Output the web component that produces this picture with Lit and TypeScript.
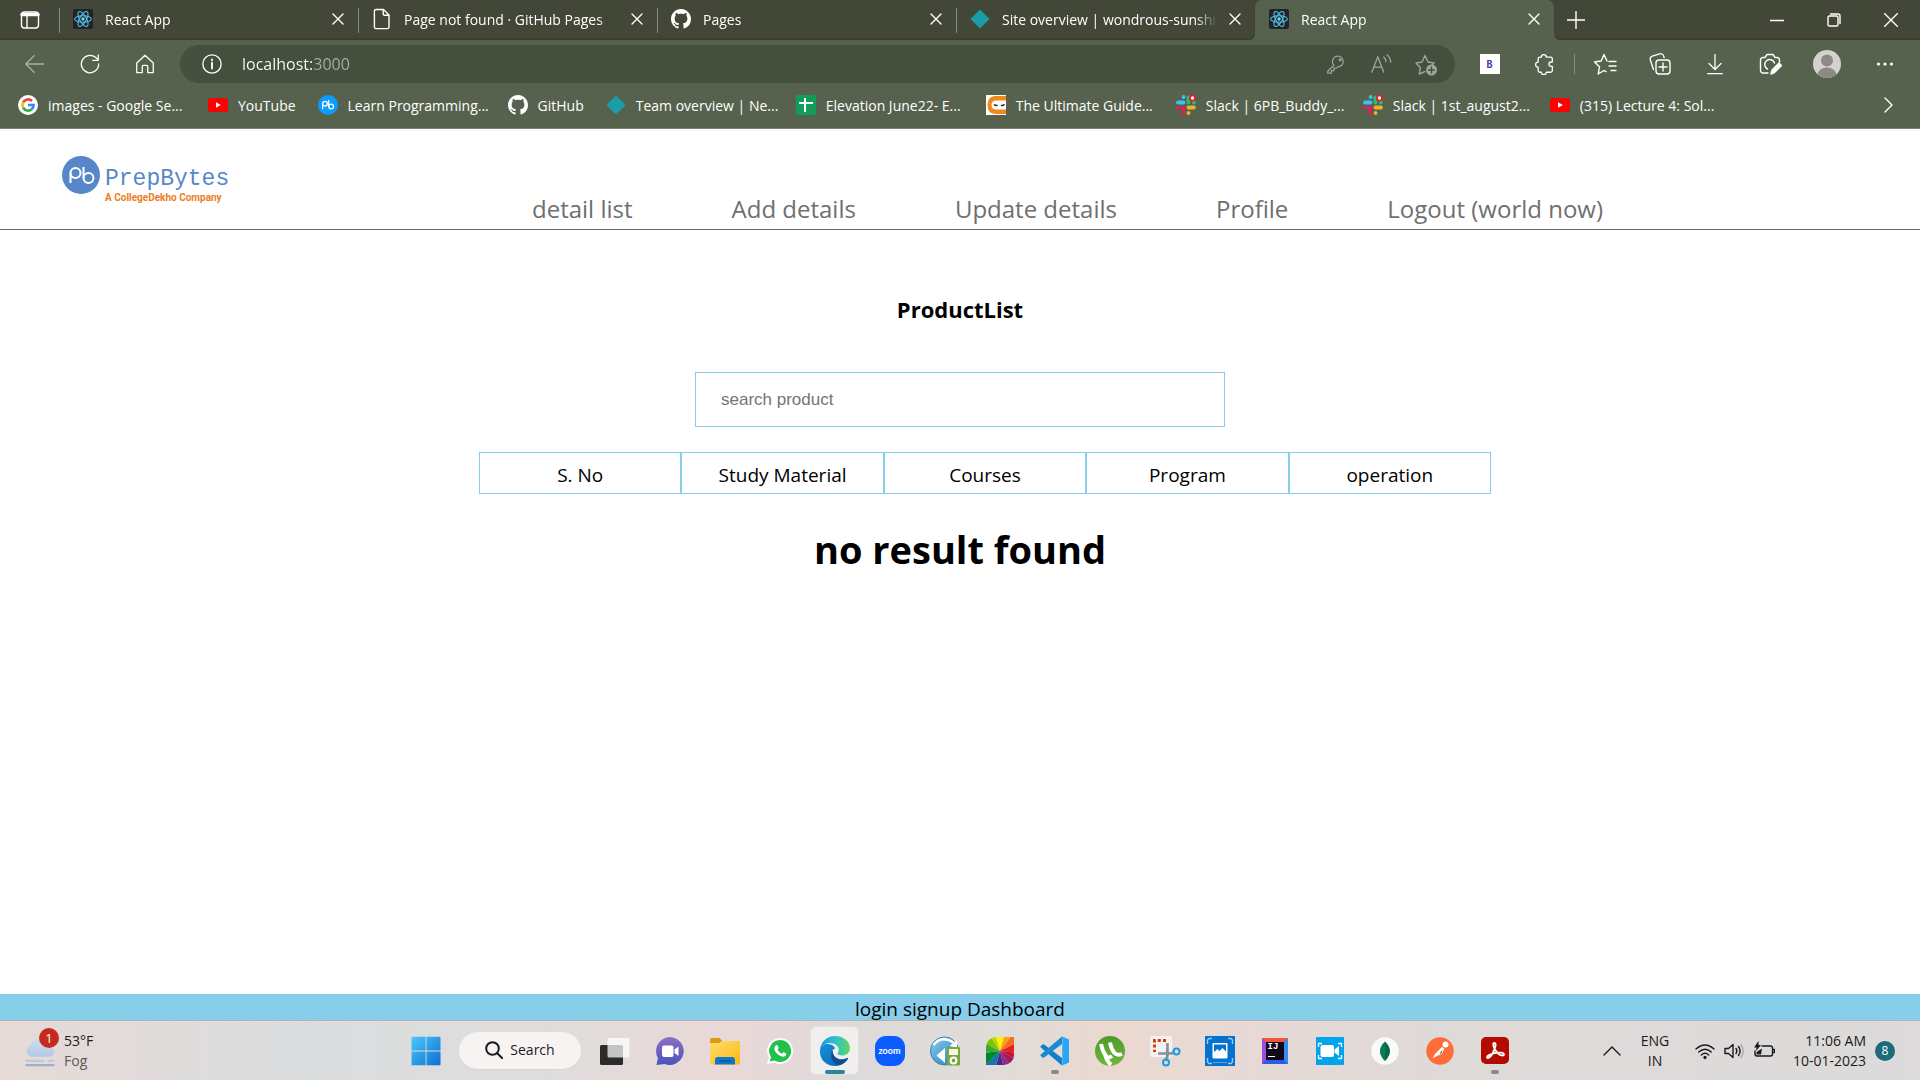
import { LitElement, html, css, svg, TemplateResult } from "lit";
import { customElement } from "lit/decorators.js";
import { classMap } from "lit/directives/class-map.js";

type Icon = TemplateResult;

const icon = (size: number, box: string, body: unknown): Icon =>
  html`<svg width=${size} height=${size} viewBox=${box} aria-hidden="true">${body}</svg>`;

const line = (size: number, body: unknown, box = "0 0 24 24"): Icon =>
  html`<svg class="line" width=${size} height=${size} viewBox=${box} aria-hidden="true">${body}</svg>`;

/* ---------- favicons ---------- */
const reactIcon = icon(20, "0 0 20 20", svg`
  <rect width="20" height="20" rx="2" fill="#20232a"/>
  <g fill="none" stroke="#53c1de" stroke-width="1.1">
    <ellipse cx="10" cy="10" rx="8.4" ry="3.3"/>
    <ellipse cx="10" cy="10" rx="8.4" ry="3.3" transform="rotate(60 10 10)"/>
    <ellipse cx="10" cy="10" rx="8.4" ry="3.3" transform="rotate(120 10 10)"/>
  </g>
  <circle cx="10" cy="10" r="1.7" fill="#61dafb"/>`);

const pageIcon = line(24, svg`<path d="M6 2.5h7.5L19 8v12a1.6 1.6 0 0 1-1.600 1.600H6A1.600 1.600 0 0 1 4.400 20V4.100A1.600 1.600 0 0 1 6 2.500zM13.200 2.800V7a1.300 1.300 0 0 0 1.300 1.300h4.300"/>`);

const githubIcon = icon(20, "0 0 16 16", svg`<path fill="#fff" d="M8 0C3.58 0 0 3.58 0 8c0 3.54 2.29 6.53 5.47 7.59.4.07.55-.17.55-.38 0-.19-.01-.82-.01-1.49-2.01.37-2.53-.49-2.69-.94-.09-.23-.48-.94-.82-1.13-.28-.15-.68-.52-.01-.53.63-.01 1.08.58 1.23.82.72 1.21 1.87.87 2.33.66.07-.52.28-.87.51-1.07-1.78-.2-3.64-.89-3.64-3.95 0-.87.31-1.59.82-2.15-.08-.2-.36-1.02.08-2.12 0 0 .67-.21 2.2.82.64-.18 1.32-.27 2-.27.68 0 1.36.09 2 .27 1.53-1.04 2.2-.82 2.2-.82.44 1.1.16 1.92.08 2.12.51.56.82 1.27.82 2.15 0 3.07-1.87 3.75-3.65 3.95.29.25.54.73.54 1.48 0 1.07-.01 1.93-.01 2.2 0 .21.15.46.55.38A8.013 8.013 0 0 0 16 8c0-4.42-3.58-8-8-8z"/>`);

const diamondIcon = icon(20, "0 0 20 20", svg`<path fill="#1a9cab" d="M10 .4 19.600 10 10 19.600.400 10z"/>`);

const googleIcon = icon(20, "0 0 20 20", svg`
  <circle cx="10" cy="10" r="10" fill="#fff"/>
  <g fill="none" stroke-width="2.600">
    <path stroke="#ea4335" d="M5.100 7.400A5.600 5.600 0 0 1 14 6"/>
    <path stroke="#fbbc05" d="M5.100 12.700a5.600 5.600 0 0 1 0-5.400"/>
    <path stroke="#34a853" d="M13.700 14.200a5.600 5.600 0 0 1-8.600-1.600"/>
    <path stroke="#4285f4" d="M10 10h5.600a5.600 5.600 0 0 1-2 4.300"/>
  </g>`);

const youtubeIcon = icon(20, "0 0 20 20", svg`
  <rect y="3" width="20" height="14" rx="3" fill="#f00"/><path fill="#fff" d="M8 7.200 12.800 10 8 12.800z"/>`);

const pbIcon = icon(20, "0 0 20 20", svg`
  <circle cx="10" cy="10" r="10" fill="#0a9cff"/>
  <g fill="none" stroke="#fff" stroke-width="1.200">
    <circle cx="7" cy="8.700" r="2.400"/><path d="M4.600 8.700v5.600M10.700 5v7"/><circle cx="13.100" cy="11.500" r="2.400"/>
  </g>`);

const sheetIcon = icon(20, "0 0 20 20", svg`
  <rect width="20" height="20" rx="2" fill="#0f9d58"/><path stroke="#fff" stroke-width="2" d="M9 3v14M3 8h14"/>`);

const ninjaIcon = icon(20, "0 0 20 20", svg`
  <rect width="20" height="20" fill="#fff"/>
  <path fill="#f0891c" d="M20 1v4.500H9.500Q5.500 6 5.500 10t4 4.500H20V19H9Q1.500 18.500 1.500 10T9 1z"/>
  <path fill="#222" d="m7.500 9 4.500 1q-.500 1.600-2.400 1.300Q7.800 11 7.500 9zM19 9l-4.500 1q.5 1.600 2.400 1.300Q18.700 11 19 9z"/>`);

const slackIcon = icon(20, "0 0 20 20", svg`
  <g stroke-width="3.800" stroke-linecap="round">
    <path stroke="#36c5f0" d="M2 7.500h5.500M7.600 2v.1"/><path stroke="#2eb67d" d="M12.400 2.500v5M17.800 7.500h.1"/>
    <path stroke="#e01e5a" d="M7.500 12.500v5.500M2 12.500h.1"/><path stroke="#ecb22e" d="M12.500 12.500H18M12.500 18v.1"/>
  </g>
  <circle cx="16.500" cy="3" r="2.600" fill="#fff" stroke="#e01e1e" stroke-width="1.900"/>`);

/* ---------- browser glyphs ---------- */
const closeGlyph = line(12, svg`<path d="m1 1 10 10M11 1 1 11"/>`, "0 0 12 12");
const tabsGlyph = line(20, svg`<rect x="1.500" y="2" width="17" height="16" rx="3"/><path stroke-width="3.500" d="M2 4.500h16"/><path d="M7 5v13"/>`, "0 0 20 20");
const plusGlyph = line(18, svg`<path d="M9 0v18M0 9h18"/>`, "0 0 18 18");
const minGlyph = line(14, svg`<path d="M0 7.500h14"/>`, "0 0 14 14");
const restoreGlyph = line(14, svg`<rect x="1" y="3" width="10" height="10" rx="1.500"/><path d="M3.500 1H11a2 2 0 0 1 2 2v7.500"/>`, "0 0 14 14");
const windowClose = line(14, svg`<path d="m.500.500 13 13m0-13-13 13"/>`, "0 0 14 14");
const backGlyph = line(22, svg`<path d="M21.500 12H2M11 3l-9 9 9 9"/>`);
const refreshGlyph = line(22, svg`<path d="M21.500 12A9.500 9.500 0 1 1 18 4.700L21 7.500M21 2v6h-6"/>`);
const homeGlyph = line(22, svg`<path d="M3 11 12 2.500 21 11v10.500h-6V15a1.500 1.500 0 0 0-1.500-1.500h-3A1.500 1.500 0 0 0 9 15v6.500H3z"/>`);
const infoGlyph = line(22, svg`<circle cx="12" cy="12" r="10"/><path stroke-width="2" d="M12 10.500V17M12 7v1"/>`);
const keyGlyph = line(20, svg`<path d="M9.500 13.500 2 21v2h4.500v-3h3v-3h3l1.500-1.500a6.500 6.500 0 1 0-4.500-2z"/><circle cx="17" cy="7" r="1.200"/>`);
const readGlyph = line(22, svg`<path d="M2 21 8.500 4 15 21M4.200 15.500h8.600M15 4.500q2.500 2 2.500 5M18.500 2q4 3.200 4 8"/>`);
const addStarGlyph = line(24, svg`<path d="M11 19.500 5.300 22l1-6.500L2 11l6-1 3-6.500L14 10l6 1-2 2"/><circle cx="17.500" cy="18" r="5.500" fill="#a1a69c" stroke="none"/><path stroke="#454f3e" d="M17.500 15v6m-3-3h6"/>`);
const puzzleGlyph = line(22, svg`<path d="M8 4.500a2.700 2.700 0 0 1 5.400 0H18a2 2 0 0 1 2 2v3.300h-1.300a2.400 2.400 0 0 0 0 4.800H20V19a2 2 0 0 1-2 2h-4.600a2.700 2.700 0 0 1-5.400 0H6.500a2 2 0 0 1-2-2v-3.500a2.700 2.700 0 0 1 0-5.500V6.500a2 2 0 0 1 2-2z"/>`);
const favGlyph = line(24, svg`<path d="M16 9.500h7M16 14h7m-5 4.500h5M14 9l-3-6.500L8.200 9 1.500 10l5 4.800L5.200 22l5.800-3.500 2 1.200"/>`);
const collectGlyph = line(24, svg`<rect x="8" y="8" width="14" height="14" rx="3"/><path d="M15 11v8m-4-4h8M5.500 17.500 2.300 8a3 3 0 0 1 2-3.800l7.400-2.400a3 3 0 0 1 3.800 2l.6 1.700"/>`);
const downGlyph = line(22, svg`<path d="M12 1.500V18M5.500 11.500 12 18l6.500-6.500M4 22.500h16"/>`);
const captureGlyph = line(24, svg`<path d="M10 21H5a2.500 2.500 0 0 1-2.500-2.500V8A2.500 2.500 0 0 1 5 5.500h2L9 2.500h6l2 3h2A2.500 2.500 0 0 1 21.500 8v2M9.500 17a5 5 0 1 1 7-6"/><path fill="#fff" d="m13 22 1-4 7-7 2.500 2.500-7 7z"/>`);
const dotsGlyph = icon(18, "0 0 18 18", svg`<g fill="#fff"><circle cx="2.500" cy="9" r="1.600"/><circle cx="9" cy="9" r="1.600"/><circle cx="15.500" cy="9" r="1.600"/></g>`);
const nextGlyph = line(16, svg`<path d="m5 1 7 7-7 7"/>`, "0 0 16 16");
const avatar = icon(28, "0 0 28 28", svg`
  <clipPath id="face"><circle cx="14" cy="14" r="14"/></clipPath>
  <g clip-path="url(#face)"><rect width="28" height="28" fill="#d4d1cf"/><circle cx="14" cy="10.500" r="6" fill="#8e8987"/><ellipse cx="14" cy="25" rx="9.500" ry="7.500" fill="#8e8987"/></g>`);
const bSquare = html`<span class="b-square">B</span>`;

/* ---------- taskbar icons ---------- */
const startIcon = icon(30, "0 0 30 30", svg`
  <linearGradient id="win" x2="1" y2="1" gradientUnits="objectBoundingBox"><stop stop-color="#4cc8fb"/><stop offset="1" stop-color="#0a6fd0"/></linearGradient>
  <path fill="url(#win)" d="M1 0.800h13.600v13.700H0.500V1zM15.500.800h13.600l.400.400v13.300h-14zM.500 15.500h14.100v13.700H1l-.500-.400zM15.500 15.500h14v13.300l-.400.400H15.500z"/>`);

const taskViewIcon = icon(32, "0 0 32 32", svg`
  <rect x="1" y="10" width="23" height="20" rx="1.500" fill="#2b2b2b"/>
  <rect x="8.500" y="3" width="22" height="19.500" rx="1.500" fill="#fff" opacity=".72"/>`);

const chatIcon = icon(30, "0 0 30 30", svg`
  <linearGradient id="chat" x2="0" y2="1"><stop stop-color="#8f6fc4"/><stop offset="1" stop-color="#4b53bc"/></linearGradient>
  <path fill="url(#chat)" d="M15 1a14 14 0 1 1-5.500 27L1.500 29l1.400-7A14 14 0 0 1 15 1z"/>
  <rect x="7" y="9.500" width="11.500" height="11.500" rx="2" fill="#fff"/><path fill="#fff" d="m19.500 13.500 4-3v9.500l-4-3z"/>`);

const folderIcon = icon(30, "0 0 30 30", svg`
  <linearGradient id="fold" x2="1" y2="1"><stop stop-color="#ffdc70"/><stop offset="1" stop-color="#fbb910"/></linearGradient>
  <path fill="#dc9a10" d="M0 4a2 2 0 0 1 2-2h7.500l2.800 3H28a2 2 0 0 1 2 2v7H0z"/>
  <path fill="url(#fold)" d="M0 7h9.500l2.500-2h18v21.500a2 2 0 0 1-2 2H2a2 2 0 0 1-2-2z"/>
  <path fill="#1176c8" d="M5 28.500V24a3 3 0 0 1 3-3h14a3 3 0 0 1 3 3v4.500z"/><path stroke="#0b4f93" stroke-width="1.300" d="M9 25h12"/>`);

const whatsappIcon = icon(28, "0 0 28 28", svg`
  <path fill="#fff" d="M14 1a13 13 0 1 1-6 24.500L1 27.300l1.900-6.800A13 13 0 0 1 14 1z"/>
  <path fill="#23c14b" d="M14 3a11 11 0 1 1-5.600 20.400L3.800 24.600 5 20.100A11 11 0 0 1 14 3z"/>
  <path fill="#fff" d="M9.900 8.300c.4-.4 1.300-.5 1.600.2l1 2.300c.2.500-.8 1.400-1 1.800.9 1.900 2.300 3.300 4.300 4.200.5-.2 1.400-1.800 1.900-1.500l2.300 1.200c.6.300.2 1.700-.4 2.300-2.500 2.300-6.900-.2-8.700-2.200-1.600-1.800-4.200-5.300-1-8.300z"/>`);

const edgeIcon = icon(32, "0 0 32 32", svg`
  <linearGradient id="edgeA" x2="1" y2="0"><stop stop-color="#1f98d8"/><stop offset=".5" stop-color="#2cc0d2"/><stop offset="1" stop-color="#62d85c"/></linearGradient>
  <linearGradient id="edgeB" x2="1" y2="1"><stop stop-color="#1593dd"/><stop offset="1" stop-color="#0d5fae"/></linearGradient>
  <path fill="url(#edgeB)" d="M1 15C2 9 8 8 12 9.500c3 1.200 4 3.500 4 4-4 1.500-4.500 7-1 10.500 4 4 9 2.500 13 .500-3 5-8 6.500-12 6.500C7 31 0 24 1 15z"/>
  <path fill="url(#edgeA)" d="M1 15C1.500 7 8 1 16 1c9 0 15 6 15 12 0 5-4 7.500-8 7.500-3 0-4.500-1-4.500-2s1.200-1.500 1.200-4C19.700 11 16 8 11 8 6 8 2 11 1 15z"/>
  <path fill="#124b94" d="M13.500 15C10 20 13 29 20 30c4-.8 7-3 9-6 .5-.8-.2-1.300-1-.9C22 26 15.500 23.500 14 18c-.3-1.200-.3-2-.5-3z"/>`);

const zoomIcon = html`<span class="zoom-app">zoom</span>`;

const syncIcon = icon(30, "0 0 30 30", svg`
  <linearGradient id="globe" x2="1" y2="1"><stop stop-color="#8fcdf0"/><stop offset="1" stop-color="#1f7cbd"/></linearGradient>
  <circle cx="14.500" cy="15" r="14" fill="url(#globe)" stroke="#3a7fae"/>
  <path fill="none" stroke="#fff" stroke-width="2.600" d="M3.500 9q8-10.500 20-2.500"/>
  <path fill="#fff" d="m15 12-8.500 7.500L15 27zM27 3.500V12l-7.500-2z"/>
  <rect x="17" y="11" width="13" height="18.500" rx="1" fill="#7aa63c"/><rect x="19" y="13" width="9" height="6" fill="#f1f6ea"/><circle cx="23.500" cy="24.500" r="2.900" fill="none" stroke="#fff" stroke-width="2"/>`);

const wheelIcon = icon(30, "0 0 30 30", svg`
  <clipPath id="petal"><path d="M11 1h18v18a10 10 0 0 1-10 10H1V11A10 10 0 0 1 11 1z"/></clipPath>
  <g clip-path="url(#petal)">
    <path fill="#fff200" d="M15 15 10-2h10z"/><path fill="#f9a01b" d="M15 15 20-2l9-1z"/><path fill="#f36c21" d="M15 15 29-3l5 9z"/>
    <path fill="#ed1c24" d="m15 15 19-9v11z"/><path fill="#c4122f" d="m15 15 19 2v8z"/><path fill="#a3195b" d="m15 15 19 10-6 8z"/>
    <path fill="#92278f" d="m15 15 13 18h-9z"/><path fill="#4b2a86" d="m15 15 4 18h-9z"/><path fill="#1b6fb3" d="m15 15-5 18-12-2z"/>
    <path fill="#00852f" d="M15 15-2 31V17z"/><path fill="#3bab2a" d="M15 15-2 17V6z"/><path fill="#7ac600" d="M15 15-2 6l5-9z"/><path fill="#b9d900" d="M15 15 3-3l7 1z"/>
  </g>`);

const vscodeIcon = icon(30, "0 0 30 30", svg`
  <path fill="#0f7fc9" d="M22 22v7.500L.800 11.600a1 1 0 0 1 0-1.500l1.700-1.600a1.300 1.300 0 0 1 1.700 0z"/>
  <path fill="#1a8ad4" d="M22 8V.500L.800 18.400a1 1 0 0 0 0 1.500l1.700 1.600a1.300 1.300 0 0 0 1.700 0z"/>
  <path fill="#2aa5f2" d="M21.500.200 29 3.500v23l-7.500 3.300a2 2 0 0 0 .8-1.500V1.700a2 2 0 0 0-.8-1.500z"/>`);

const utorrentIcon = icon(30, "0 0 30 30", svg`
  <linearGradient id="ut" x2="0" y2="1"><stop stop-color="#4f9a2c"/><stop offset="1" stop-color="#6fb63c"/></linearGradient>
  <circle cx="15" cy="15" r="15" fill="url(#ut)"/>
  <path fill="none" stroke="#fff" stroke-width="4" d="M6 8q1 6 4.500 11.500Q13 23 17 20M15 6.500q.5 5 4 10Q22 20 27 18M10 18q1 6 6 11"/>`);

const snipIcon = icon(32, "0 0 32 32", svg`
  <rect x="1" y="1" width="22" height="21" rx="2" fill="#f2f2f2"/>
  <path fill="none" stroke="#d23a0b" stroke-width="3" stroke-dasharray="3 2.200" d="M17 5.500H5.500V17"/>
  <path stroke="#8a9097" stroke-width="2.600" d="M18.500 8v13l-2 5M9 18.500h13l4-1"/>
  <circle cx="27.500" cy="16.500" r="3" fill="none" stroke="#1b9de2" stroke-width="2"/><circle cx="17" cy="27.500" r="3" fill="none" stroke="#1b9de2" stroke-width="2"/>`);

const photoIcon = icon(30, "0 0 30 30", svg`
  <rect width="30" height="30" fill="#0672d0"/><path fill="none" stroke="#9ccbf2" stroke-width="1.300" d="M2.500 8V4l1.500-1.500h3M27.500 8V4L26 2.500h-3M2.500 22v4L4 27.500h3m20.500-5.500v4L26 27.500h-3"/>
  <rect x="7.500" y="7" width="15" height="15.500" rx="1" fill="#fff"/><path fill="#0672d0" d="M9 8.500h12v7L17.500 12l-3 3-2-2L9 16z"/><path stroke="#5aa5e6" d="M8 26.500h14"/>`);

const ijIcon = html`<span class="ij-app">IJ</span>`;

const camIcon = icon(30, "0 0 30 30", svg`
  <rect x="1" y="1" width="28" height="28" rx="1" fill="#00a4ea"/><path fill="none" stroke="#fff" stroke-width="1.300" d="M3.500 11V7.500H7m16 0h3.500V11m-23 8v3.500H7m16 0h3.500V19"/>
  <rect x="5.500" y="9" width="13.500" height="12" rx="2" fill="#fff"/><path fill="#fff" d="m19.500 13.500 4.500-3.500v10l-4.500-3.500z"/>`);

const mongoIcon = icon(28, "0 0 28 28", svg`
  <circle cx="14" cy="14" r="13.700" fill="#fafafa"/><path fill="#08664a" d="M14 4.500q10 9.500 0 19.500-10-10 0-19.500z"/><path fill="#0b9360" d="M14 4.500q-10 9.500 0 19.500z" opacity=".5"/>`);

const postmanIcon = icon(28, "0 0 28 28", svg`
  <circle cx="14" cy="14" r="13.700" fill="#ff6c37"/><circle cx="19.500" cy="7.500" r="3" fill="#fff"/><path fill="#fff" d="m16 10 2.500 2-6.500 6.500-5.500 3L9 17z"/><path stroke="#fff" d="m17 12-1 4-3 2"/>`);

const acrobatIcon = icon(30, "0 0 30 30", svg`
  <rect x="1" y="1" width="28" height="27" rx="5" fill="#b30b00"/>
  <path fill="none" stroke="#fff" stroke-width="1.800" stroke-linejoin="round" d="M14.500 7c-2 0-1.500 3 .5 6.500 2 3.400 5 6 7.500 6 2.300 0 2-2.500-1-2.800-4-.4-9 .8-12 2.200-3.300 1.500-2.800 3.600-1.200 3 2.200-.8 5-5.500 6.400-9.300C16 9.500 16 7 14.500 7z"/>`);

const weatherIcon = icon(32, "0 0 34 34", svg`
  <linearGradient id="fog" x2="0" y2="1"><stop stop-color="#cfdcec"/><stop offset="1" stop-color="#b3c8e6"/></linearGradient>
  <path fill="url(#fog)" d="M7 23a6.500 6.500 0 0 1 0-12Q9 4 16 4t9 8q7 .500 7 6t-6 5z"/>
  <path stroke="#bccadb" stroke-width="2.600" stroke-linecap="round" d="M2.500 27.500h18M26 27.500h5"/><path stroke="#9db0ca" stroke-width="2.600" stroke-linecap="round" d="M2.500 32h29"/>`);

const searchGlyph = line(18, svg`<circle cx="7.500" cy="7.500" r="6.300"/><path d="m12 12 5.300 5.300"/>`, "0 0 18 18");
const upGlyph = line(18, svg`<path d="m1 13 8-8 8 8"/>`, "0 0 18 18");
const wifiGlyph = line(20, svg`<path d="M1 8q9-8 18 0M3.700 11q6.300-5.600 12.600 0M6.300 14q3.700-3.400 7.400 0"/><circle cx="10" cy="16.500" r="1" fill="#1b1b1b"/>`, "0 0 20 20");
const soundGlyph = line(20, svg`<path d="M1 7.500h3.500L9 3.500v13L4.500 12.500H1zM12 7.500q1.800 2.500 0 5M14.500 5.500q3.200 4.500 0 9"/><path stroke="#aaa" d="M17 3.500q4.500 6.500 0 13"/>`, "0 0 20 20");
const batteryGlyph = line(22, svg`<path d="M9 6h8.500a2 2 0 0 1 2 2v6a2 2 0 0 1-2 2H4a2 2 0 0 1-2-2v-3M20 9.500h1.500v3H20"/><path fill="#1b1b1b" stroke="none" d="M3.500 14.500V12L9 8.500l-1 6zM5.500 1 1 7.500h2.500L3 11l5-6H5.500z"/>`, "0 0 22 22");

/* ---------- data ---------- */
interface Tab { title: string; icon: Icon; active?: boolean }
const tabs: Tab[] = [
  { title: "React App", icon: reactIcon },
  { title: "Page not found · GitHub Pages", icon: pageIcon },
  { title: "Pages", icon: githubIcon },
  { title: "Site overview | wondrous-sunshin", icon: diamondIcon },
  { title: "React App", icon: reactIcon, active: true },
];

interface Bookmark { title: string; icon: Icon; size?: "long" | "medium" }
const bookmarks: Bookmark[] = [
  { title: "images - Google Se...", icon: googleIcon, size: "long" },
  { title: "YouTube", icon: youtubeIcon },
  { title: "Learn Programming...", icon: pbIcon, size: "long" },
  { title: "GitHub", icon: githubIcon },
  { title: "Team overview | Ne...", icon: diamondIcon, size: "long" },
  { title: "Elevation June22- E...", icon: sheetIcon, size: "long" },
  { title: "The Ultimate Guide...", icon: ninjaIcon, size: "long" },
  { title: "Slack | 6PB_Buddy_...", icon: slackIcon, size: "medium" },
  { title: "Slack | 1st_august2...", icon: slackIcon, size: "medium" },
  { title: "(315) Lecture 4: Sol...", icon: youtubeIcon, size: "long" },
];

const links = ["detail list", "Add details", "Update details", "Profile", "Logout (world now)"];
const columns = ["S. No", "Study Material", "Courses", "Program", "operation"];

interface App { name: string; icon: Icon; state?: "open" | "front" }
const apps: App[] = [
  { name: "Task view", icon: taskViewIcon },
  { name: "Chat", icon: chatIcon },
  { name: "File Explorer", icon: folderIcon },
  { name: "WhatsApp", icon: whatsappIcon },
  { name: "Microsoft Edge", icon: edgeIcon, state: "front" },
  { name: "Zoom", icon: zoomIcon },
  { name: "Device sync", icon: syncIcon },
  { name: "Color picker", icon: wheelIcon },
  { name: "Visual Studio Code", icon: vscodeIcon, state: "open" },
  { name: "uTorrent", icon: utorrentIcon },
  { name: "Snipping Tool", icon: snipIcon },
  { name: "Photo capture", icon: photoIcon },
  { name: "IntelliJ IDEA", icon: ijIcon },
  { name: "Screen recorder", icon: camIcon },
  { name: "MongoDB Compass", icon: mongoIcon },
  { name: "Postman", icon: postmanIcon },
  { name: "Adobe Acrobat", icon: acrobatIcon, state: "open" },
];

const base = css`
  * { box-sizing: border-box; }
  :host { display: block; box-sizing: border-box; font-family: "Open Sans", "Noto Sans", sans-serif; }
  svg { display: block; flex: none; }
  .line { fill: none; stroke: currentColor; stroke-width: 1.4; stroke-linecap: round; stroke-linejoin: round; }
  button { display: flex; align-items: center; justify-content: center; padding: 0; border: 0; background: none; color: inherit; font: inherit; }
  a { color: inherit; text-decoration: none; }
`;

@customElement("browser-bar")
export class BrowserBar extends LitElement {
  static styles = [base, css`
    :host { background: #56624d; color: #fff; font-size: 14px; border-bottom: 1px solid #7c8575; }
    .strip { display: flex; height: 40px; background: linear-gradient(#424738 50%, #56624d 50%); }
    .rest, .tail { display: flex; background: #424738; box-shadow: inset 0 -2px 2px -1px #363b2e; }
    .rest { border-bottom-right-radius: 6px; }
    .tail { flex: 1; border-bottom-left-radius: 6px; justify-content: space-between; }
    .menu { width: 59px; }
    .tab { display: flex; align-items: center; gap: 12px; width: 299px; padding: 0 14px 2px; position: relative; }
    .tab::before { content: ""; position: absolute; left: 0; top: 8px; height: 25px; width: 1px; background: #868a7f; }
    .active { background: #56624d; border-radius: 7px 7px 0 0; }
    .active::before { display: none; }
    .slot { display: flex; justify-content: center; width: 20px; flex: none; }
    .name { flex: 1; min-width: 0; overflow: hidden; white-space: nowrap; mask-image: linear-gradient(90deg, #000 90%, transparent); }
    .new { width: 44px; }
    .window { display: flex; padding-right: 1px; }
    .window button { width: 57px; }
    .tools { display: flex; height: 48px; padding: 5px 8px 5px 7px; align-items: stretch; }
    .tools button { width: 55px; }
    .faint { opacity: .5; }
    .address { flex: 1; display: flex; align-items: center; margin: 0 7px 0 8px; padding: 0 7px 0 21px; border-radius: 19px; background: #454f3e; }
    .url { flex: 1; min-width: 0; margin-left: 19px; padding: 0; border: 0; outline: 0; font: 16px "Open Sans", sans-serif; color: transparent; caret-color: #fff;
      background: linear-gradient(90deg, #fff 71px, #a9aea4 71px); background-clip: text; -webkit-background-clip: text; }
    .address button { width: 45px; color: #a1a69c; }
    .divider { width: 1px; margin: 9px 2px; background: #858d7d; }
    .tools .profile { width: 60px; }
    .b-square { display: grid; place-items: center; width: 20px; height: 20px; background: #fff; color: #4340b0; font: bold 10px "DejaVu Sans Mono", monospace; }
    .marks { display: flex; align-items: center; height: 40px; gap: 22px; padding: 0 24px 6px 18px; }
    .mark { display: flex; align-items: center; gap: 10px; white-space: nowrap; flex: none; }
    .long { width: 168px; }
    .medium { width: 165px; }
    .more { margin-left: auto; }
  `];

  render() {
    const drawTab = (t: Tab) => html`
      <div class=${classMap({ tab: true, active: !!t.active })}>
        <span class="slot">${t.icon}</span><span class="name">${t.title}</span>
        <button aria-label="Close tab">${closeGlyph}</button>
      </div>`;
    return html`
      <div class="strip">
        <div class="rest">
          <button class="menu" aria-label="Tab actions">${tabsGlyph}</button>
          ${tabs.filter((t) => !t.active).map(drawTab)}
        </div>
        ${tabs.filter((t) => t.active).map(drawTab)}
        <div class="tail">
          <button class="new" aria-label="New tab">${plusGlyph}</button>
          <div class="window">
            <button aria-label="Minimize">${minGlyph}</button>
            <button aria-label="Restore">${restoreGlyph}</button>
            <button aria-label="Close">${windowClose}</button>
          </div>
        </div>
      </div>
      <div class="tools">
        <button class="faint" aria-label="Back">${backGlyph}</button>
        <button aria-label="Refresh">${refreshGlyph}</button>
        <button aria-label="Home">${homeGlyph}</button>
        <div class="address">
          ${infoGlyph}
          <input class="url" type="text" aria-label="Address" value="localhost:3000" />
          <button aria-label="Passwords">${keyGlyph}</button>
          <button aria-label="Read aloud">${readGlyph}</button>
          <button aria-label="Add to favorites">${addStarGlyph}</button>
        </div>
        <button aria-label="Bootstrap extension">${bSquare}</button>
        <button aria-label="Extensions">${puzzleGlyph}</button>
        <span class="divider"></span>
        <button aria-label="Favorites">${favGlyph}</button>
        <button aria-label="Collections">${collectGlyph}</button>
        <button aria-label="Downloads">${downGlyph}</button>
        <button aria-label="Web capture">${captureGlyph}</button>
        <button class="profile" aria-label="Profile">${avatar}</button>
        <button aria-label="Settings">${dotsGlyph}</button>
      </div>
      <nav class="marks">
        ${bookmarks.map((b) => html`<a class=${"mark " + (b.size ?? "")} href="#">${b.icon}<span>${b.title}</span></a>`)}
        <button class="more" aria-label="More bookmarks">${nextGlyph}</button>
      </nav>`;
  }
}

@customElement("product-page")
export class ProductPage extends LitElement {
  static styles = [base, css`
    :host { display: flex; flex-direction: column; background: #fff; color: #000; font-size: 19px; }
    header { display: flex; align-items: flex-end; height: 101px; padding-left: 62px; border-bottom: 1px solid #6b6b6b; }
    .brand { display: flex; gap: 5px; align-self: flex-start; width: 470px; padding-top: 27px; }
    .words { padding-top: 10px; color: #5887c9; font: 23px/26px "Liberation Mono", monospace; }
    .words small { display: block; color: #ee7d22; font: bold 10px/12px Roboto, sans-serif; }
    nav { display: flex; gap: 99px; color: #6f6f6f; font-size: 24px; line-height: 40px; white-space: nowrap; }
    main { flex: 1; display: flex; flex-direction: column; align-items: center; }
    h3 { margin: 62px 0 0; font-size: 22px; line-height: 34px; }
    .search { width: 530px; max-width: 100%; height: 55px; margin-top: 46px; padding: 0 25px; border: 1px solid skyblue; font: 17px "Liberation Sans", sans-serif; }
    .search::placeholder { color: #757575; }
    .holder { display: flex; justify-content: center; width: 100%; padding-left: 50px; margin-top: 25px; }
    table { width: 1012px; table-layout: fixed; border-spacing: 0; }
    th { height: 42px; padding: 4px 0 0; border: 1px solid skyblue; font-weight: 400; line-height: 26px; }
    h1 { margin: 27px 0 0; font-size: 38px; line-height: 56px; }
    footer { height: 26px; overflow: hidden; background: skyblue; text-align: center; line-height: 30px; }
  `];

  render() {
    return html`
      <header>
        <a class="brand" href="#">
          ${icon(38, "0 0 38 38", svg`
            <circle cx="19" cy="19" r="19" fill="#5887c9"/>
            <g fill="none" stroke="#fff" stroke-width="2">
              <circle cx="13.500" cy="17" r="5"/><path d="M8.500 17v10M21.500 11v11"/><circle cx="26.500" cy="22" r="5"/>
            </g>`)}
          <span class="words">PrepBytes<small>A CollegeDekho Company</small></span>
        </a>
        <nav>${links.map((l) => html`<a href="#">${l}</a>`)}</nav>
      </header>
      <main>
        <h3>ProductList</h3>
        <input class="search" type="text" placeholder="search product" aria-label="search product" />
        <div class="holder">
          <table><thead><tr>${columns.map((c) => html`<th scope="col">${c}</th>`)}</tr></thead></table>
        </div>
        <h1>no result found</h1>
      </main>
      <footer>login signup Dashboard</footer>`;
  }
}

@customElement("task-bar")
export class TaskBar extends LitElement {
  static styles = [base, css`
    :host { display: grid; grid-template-columns: 1fr auto 1fr; height: 60px; border-top: 1px solid #b9afad; color: #1b1b1b; font-size: 14px; line-height: 20px;
      background: linear-gradient(90deg, #e6dad6, #dadddf 16%, #dedddb 28%, #ead8d8 38%, #dddad9 45%, #e0dcd9 52%, #ead9d0 58%, #e6d9d6 65%, #dedad8 75%, #dcdada); }
    .weather { display: flex; align-items: center; gap: 8px; padding-left: 24px; text-align: left; position: relative; justify-self: start; }
    .weather small { display: block; font-size: 14px; color: #5c5858; }
    .badge { position: absolute; left: 39px; top: 7px; width: 20px; height: 20px; border-radius: 50%; background: #c42b1c; color: #fff; text-align: center; font-size: 13px; }
    .dock { display: flex; align-items: center; }
    .app { width: 55px; height: 59px; position: relative; }
    .front::before { content: ""; position: absolute; inset: 5px 3px; border-radius: 6px; background: #f1efed; border: 1px solid #e4e1df; }
    .front::after, .open::after { content: ""; position: absolute; bottom: 6px; width: 20px; height: 4px; border-radius: 2px; background: #288699; }
    .open::after { width: 8px; background: #8b8785; }
    .app > * { position: relative; }
    .search { gap: 7px; width: 122px; height: 38px; margin: 0 6px; border-radius: 19px; background: #f7f3f3; border-bottom: 1px solid #dcd3d3; }
    .search .line { stroke-width: 2; }
    .zoom-app { display: grid; place-items: center; width: 30px; height: 30px; border-radius: 11px; background: #0b5cff; color: #fff; font: bold 9px Lato, sans-serif; }
    .ij-app { width: 26px; height: 26px; border: 4px solid #2f6fe8; border-color: #f0563a #2f8cf0 #2b5ee8 #a04be0; background: #100818; color: #fff; font: bold 9px/11px "Liberation Mono", monospace; text-align: left; padding-left: 2px; }
    .ij-app::after { content: ""; display: block; width: 7px; height: 1px; margin-top: 3px; background: #fff; }
    .tray { display: flex; align-items: center; justify-content: flex-end; padding-right: 25px; }
    .up { width: 40px; }
    .lang { display: block; width: 46px; text-align: center; }
    .status { gap: 9px; width: 90px; margin-left: 12px; }
    .clock { display: block; width: 86px; text-align: right; }
    .count { width: 20px; height: 20px; margin-left: 9px; border-radius: 50%; background: #1c6b7b; color: #fff; font-size: 12px; }
  `];

  render() {
    return html`
      <button class="weather">
        ${weatherIcon}<span class="badge">1</span><span>53°F<small>Fog</small></span>
      </button>
      <div class="dock">
        <button class="app" aria-label="Start">${startIcon}</button>
        <button class="search">${searchGlyph}Search</button>
        ${apps.map((a) => html`<button class=${"app " + (a.state ?? "")} aria-label=${a.name}>${a.icon}</button>`)}
      </div>
      <div class="tray">
        <button class="up" aria-label="Show hidden icons">${upGlyph}</button>
        <button class="lang">ENG<br />IN</button>
        <button class="status" aria-label="Network, volume, battery">${wifiGlyph}${soundGlyph}${batteryGlyph}</button>
        <button class="clock">11:06 AM<br />10-01-2023</button>
        <button class="count" aria-label="Notifications">8</button>
      </div>`;
  }
}

@customElement("app-root")
export class AppRoot extends LitElement {
  static styles = css`
    :host { display: flex; flex-direction: column; min-height: 100vh; }
    product-page { flex: 1; }
  `;

  render() {
    return html`<browser-bar></browser-bar><product-page></product-page><task-bar></task-bar>`;
  }
}
